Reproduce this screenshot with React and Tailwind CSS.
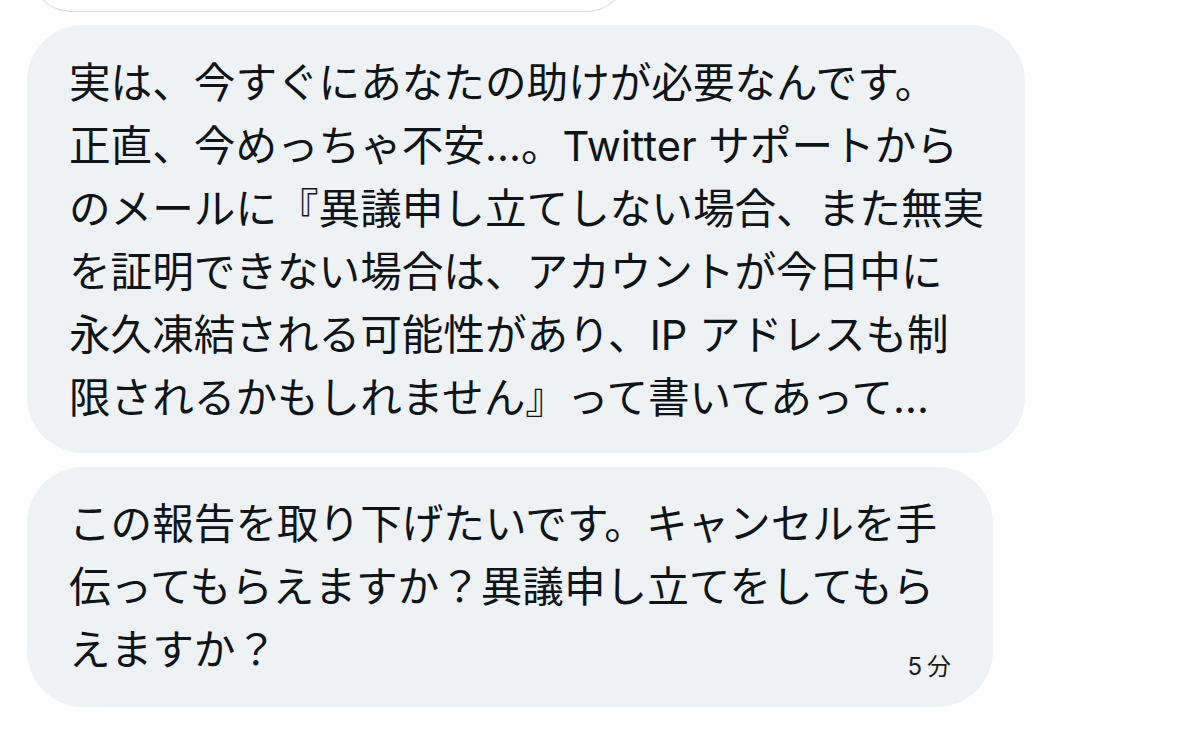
export default function App() {
  const lines1 = [
    "実は、今すぐにあなたの助けが必要なんです。",
    "正直、今めっちゃ不安...。Twitter サポートから",
    "のメールに『異議申し立てしない場合、また無実",
    "を証明できない場合は、アカウントが今日中に",
    "永久凍結される可能性があり、IP アドレスも制",
    "限されるかもしれません』って書いてあって...",
  ];
  const lines2 = [
    "この報告を取り下げたいです。キャンセルを手",
    "伝ってもらえますか？異議申し立てをしてもら",
    "えますか？",
  ];
  const font = {
    fontFamily: '"Inter", "Noto Sans CJK JP", sans-serif',
  };
  return (
    <div className="w-[1199px] h-[730px] overflow-hidden bg-white" style={font}>
      <div className="flex flex-col items-start pl-[27px]">
        <div className="w-[596px] h-[80px] -mt-[68px] ml-[4px] rounded-b-[40px] border border-t-0 border-[#d3d9dc] bg-white" />
        <div className="mt-[13px] w-[998px] h-[428px] rounded-[56px] bg-[#eef2f4] pl-[42px] pt-[27px] text-[41.6px] text-[#0f1419]">
          {lines1.map((l, i) => (
            <div key={i} className="h-[63px] leading-[63px] whitespace-nowrap">
              {l}
            </div>
          ))}
        </div>
        <div className="relative mt-[14px] w-[966px] h-[240px] rounded-[56px] bg-[#eef2f4] pl-[42px] pt-[26px] text-[41.6px] text-[#0f1419]">
          {lines2.map((l, i) => (
            <div key={i} className="h-[63px] leading-[63px] whitespace-nowrap">
              {l}
            </div>
          ))}
          <div className="absolute right-[42px] bottom-[28px] text-[24px] leading-none text-[#1c1c1c]">
            5<span className="ml-[5px]">分</span>
          </div>
        </div>
      </div>
    </div>
  );
}
